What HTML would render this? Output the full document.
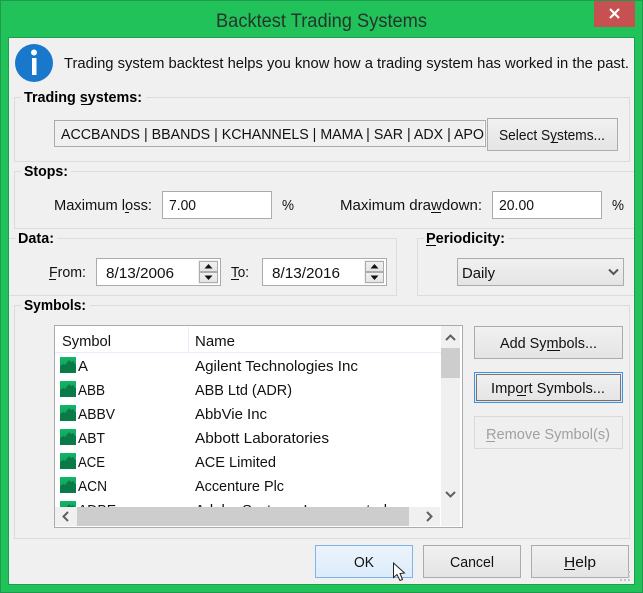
<!DOCTYPE html>
<html><head><meta charset="utf-8"><title>Backtest Trading Systems</title>
<style>
html,body{margin:0;padding:0;width:643px;height:593px;overflow:hidden;background:#22c25a}
svg{display:block;position:absolute;left:0;top:0}
text{font-family:"Liberation Sans",sans-serif;font-size:15.2px;fill:#111}
.b{font-weight:bold;font-size:14.6px;fill:#000}
.g{fill:none;stroke:#dcdcdc;stroke-width:1}
.box{fill:#fff;stroke:#ababab;stroke-width:1}
.btn{fill:url(#bg);stroke:#acacac;stroke-width:1}
.u{stroke:#111;stroke-width:1}
.ar{fill:none;stroke:#606060;stroke-width:2}
.lbg{fill:#f0f0f0}
</style></head><body>
<svg width="643" height="593" viewBox="0 0 643 593" xmlns="http://www.w3.org/2000/svg">
<defs>
<linearGradient id="bg" x1="0" y1="0" x2="0" y2="1"><stop offset="0" stop-color="#f1f1f1"/><stop offset="1" stop-color="#e4e4e4"/></linearGradient>
<linearGradient id="ok" x1="0" y1="0" x2="0" y2="1"><stop offset="0" stop-color="#ecf4fc"/><stop offset="1" stop-color="#dcecfc"/></linearGradient>
<linearGradient id="ic" x1="0" y1="0" x2="0" y2="1"><stop offset="0" stop-color="#13b469"/><stop offset="1" stop-color="#0f9a58"/></linearGradient>
<symbol id="stock" width="16" height="16" viewBox="0 0 16 16">
<rect width="16" height="16" fill="url(#ic)"/>
<path d="M0 9L3 7L5 8L9 3L11 5L13 4L16 8V16H0Z" fill="#0b7a49"/>
</symbol>
<clipPath id="listclip"><rect x="55" y="353" width="386" height="154"/></clipPath>
</defs>

<!-- window frame -->
<rect x="0.5" y="0.5" width="642" height="592" fill="#22c25a" stroke="#1d9a4c"/>
<text x="216" y="27" textLength="211" lengthAdjust="spacingAndGlyphs" style="font-size:19.5px;fill:#24352c">Backtest Trading Systems</text>
<rect x="594" y="1" width="41" height="26" fill="#c75050"/>
<path d="M610 9L619 18M619 9L610 18" stroke="#fff" stroke-width="2.2" fill="none"/>

<!-- client -->
<rect x="8.5" y="37.5" width="626" height="547" fill="#f0f0f0" stroke="#1ba04e"/>

<!-- info -->
<circle cx="34" cy="63" r="19" fill="#1a78cc"/>
<circle cx="34" cy="52.500" r="3" fill="#fff"/>
<rect x="32" y="58" width="4.500" height="17" fill="#fff"/>
<text x="64" y="68" textLength="565" lengthAdjust="spacingAndGlyphs">Trading system backtest helps you know how a trading system has worked in the past.</text>

<!-- trading systems group -->
<rect class="g" x="14.500" y="97.500" width="615" height="64"/>
<rect class="lbg" x="21" y="90" width="125" height="14"/>
<text class="b" x="24" y="102" textLength="118" lengthAdjust="spacingAndGlyphs">Trading systems:</text>
<path class="u" d="M81 104.500H89" style="stroke:#000"/>
<rect x="54.500" y="120.500" width="431" height="26" fill="#f0f0f0" stroke="#ababab"/>
<rect x="484" y="121" width="1" height="25" fill="#fff"/>
<text x="61" y="139" textLength="423" lengthAdjust="spacingAndGlyphs">ACCBANDS | BBANDS | KCHANNELS | MAMA | SAR | ADX | APO</text>
<rect class="btn" x="487.500" y="118.500" width="130" height="32"/>
<text x="499" y="140" textLength="106" lengthAdjust="spacingAndGlyphs">Select Systems...</text>
<path class="u" d="M551 142.500H558"/>

<!-- stops group -->
<path class="g" d="M634 171.500H14.500V228.500H634"/>
<rect class="lbg" x="21" y="164" width="50" height="14"/>
<text class="b" x="24" y="176" textLength="44" lengthAdjust="spacingAndGlyphs">Stops:</text>
<text x="54" y="210" textLength="98" lengthAdjust="spacingAndGlyphs">Maximum loss:</text>
<path class="u" d="M125 212.500H129"/>
<rect class="box" x="162.500" y="191.500" width="109" height="27"/>
<text x="169" y="210" textLength="27" lengthAdjust="spacingAndGlyphs">7.00</text>
<text x="282" y="210" textLength="12" lengthAdjust="spacingAndGlyphs">%</text>
<text x="340" y="210" textLength="142" lengthAdjust="spacingAndGlyphs">Maximum drawdown:</text>
<path class="u" d="M431 212.500H441"/>
<rect class="box" x="492.500" y="191.500" width="109" height="27"/>
<text x="499" y="210" textLength="35" lengthAdjust="spacingAndGlyphs">20.00</text>
<text x="612" y="210" textLength="12" lengthAdjust="spacingAndGlyphs">%</text>

<!-- data group -->
<path class="g" d="M9 238.500H396.500V295.500H9"/>
<rect class="lbg" x="16" y="231" width="41" height="14"/>
<text class="b" x="18" y="243" textLength="36" lengthAdjust="spacingAndGlyphs">Data:</text>
<text x="49" y="277" textLength="37" lengthAdjust="spacingAndGlyphs">From:</text>
<path class="u" d="M49 279.500H56"/>
<rect class="box" x="96.500" y="258.500" width="124" height="27"/>
<text x="106" y="278" textLength="68" lengthAdjust="spacingAndGlyphs">8/13/2006</text>
<rect x="198" y="260" width="20" height="24" fill="#f0f0f0"/>
<rect x="199.500" y="261.500" width="18" height="10" fill="url(#bg)" stroke="#acacac"/>
<rect x="199.500" y="272.500" width="18" height="10" fill="url(#bg)" stroke="#acacac"/>
<path d="M208.500 264L212.500 268.500H204.500Z" fill="#111"/>
<path d="M208.500 280L212.500 275.500H204.500Z" fill="#111"/>
<text x="231" y="277" textLength="18" lengthAdjust="spacingAndGlyphs">To:</text>
<path class="u" d="M231 279.500H239"/>
<rect class="box" x="262.500" y="258.500" width="124" height="27"/>
<text x="272" y="278" textLength="68" lengthAdjust="spacingAndGlyphs">8/13/2016</text>
<rect x="364" y="260" width="20" height="24" fill="#f0f0f0"/>
<rect x="365.500" y="261.500" width="18" height="10" fill="url(#bg)" stroke="#acacac"/>
<rect x="365.500" y="272.500" width="18" height="10" fill="url(#bg)" stroke="#acacac"/>
<path d="M374.500 264L378.500 268.500H370.500Z" fill="#111"/>
<path d="M374.500 280L378.500 275.500H370.500Z" fill="#111"/>

<!-- periodicity group -->
<path class="g" d="M634 238.500H417.500V295.500H634"/>
<rect class="lbg" x="424" y="231" width="84" height="14"/>
<text class="b" x="426" y="243" textLength="79" lengthAdjust="spacingAndGlyphs">Periodicity:</text>
<path class="u" d="M426 245.500H436" style="stroke:#000"/>
<rect class="btn" x="457.500" y="258.500" width="166" height="27"/>
<text x="462" y="278" textLength="33" lengthAdjust="spacingAndGlyphs">Daily</text>
<path class="ar" d="M609 269.500L613.500 274L618 269.500" style="stroke:#555"/>

<!-- symbols group -->
<rect class="g" x="14.500" y="305.500" width="615" height="233"/>
<rect class="lbg" x="21" y="298" width="69" height="14"/>
<text class="b" x="24" y="310" textLength="62" lengthAdjust="spacingAndGlyphs">Symbols:</text>

<!-- list -->
<rect class="box" x="54.500" y="325.500" width="408" height="202"/>
<path d="M55 352.500H441" stroke="#e5effb"/>
<path d="M188.500 327V352" stroke="#e5effb"/>
<text x="62" y="346" textLength="49" lengthAdjust="spacingAndGlyphs">Symbol</text>
<text x="195" y="346" textLength="40" lengthAdjust="spacingAndGlyphs">Name</text>
<g clip-path="url(#listclip)">
<use href="#stock" x="60" y="357"/><text x="78" y="371" textLength="10" lengthAdjust="spacingAndGlyphs">A</text><text x="195" y="371" textLength="163" lengthAdjust="spacingAndGlyphs">Agilent Technologies Inc</text>
<use href="#stock" x="60" y="381"/><text x="78" y="395" textLength="27" lengthAdjust="spacingAndGlyphs">ABB</text><text x="195" y="395" textLength="97" lengthAdjust="spacingAndGlyphs">ABB Ltd (ADR)</text>
<use href="#stock" x="60" y="405"/><text x="78" y="419" textLength="37" lengthAdjust="spacingAndGlyphs">ABBV</text><text x="195" y="419" textLength="72" lengthAdjust="spacingAndGlyphs">AbbVie Inc</text>
<use href="#stock" x="60" y="429"/><text x="78" y="443" textLength="27" lengthAdjust="spacingAndGlyphs">ABT</text><text x="195" y="443" textLength="134" lengthAdjust="spacingAndGlyphs">Abbott Laboratories</text>
<use href="#stock" x="60" y="453"/><text x="78" y="467" textLength="27" lengthAdjust="spacingAndGlyphs">ACE</text><text x="195" y="467" textLength="81" lengthAdjust="spacingAndGlyphs">ACE Limited</text>
<use href="#stock" x="60" y="477"/><text x="78" y="491" textLength="29" lengthAdjust="spacingAndGlyphs">ACN</text><text x="195" y="491" textLength="89" lengthAdjust="spacingAndGlyphs">Accenture Plc</text>
<use href="#stock" x="60" y="501"/><text x="78" y="515" textLength="38" lengthAdjust="spacingAndGlyphs">ADBE</text><text x="195" y="515" textLength="192" lengthAdjust="spacingAndGlyphs">Adobe Systems Incorporated</text>
</g>
<!-- scrollbars -->
<rect x="55" y="507" width="385" height="19" fill="#f0f0f0"/>
<rect x="77" y="507" width="332" height="19" fill="#cdcdcd"/>
<path class="ar" d="M68 512L63.500 516.500L68 521"/>
<path class="ar" d="M427 512L431.500 516.500L427 521"/>
<rect x="441" y="326" width="19" height="200" fill="#f0f0f0"/>
<rect x="441" y="348" width="19" height="30" fill="#cdcdcd"/>
<path class="ar" d="M446 340L450.500 335.500L455 340"/>
<path class="ar" d="M446 492L450.500 496.500L455 492"/>

<!-- side buttons -->
<rect class="btn" x="474.500" y="326.500" width="148" height="32"/>
<text x="500" y="348" textLength="97" lengthAdjust="spacingAndGlyphs">Add Symbols...</text>
<path class="u" d="M547 350.500H560"/>
<rect x="474.500" y="372.500" width="148" height="30" fill="url(#bg)" stroke="#3c94e4"/>
<rect x="476.500" y="374.500" width="144" height="26" fill="none" stroke="#000" stroke-dasharray="1 1"/>
<text x="491" y="393" textLength="114" lengthAdjust="spacingAndGlyphs">Import Symbols...</text>
<path class="u" d="M517 395.500H526"/>
<rect x="474.500" y="416.500" width="148" height="32" fill="#efefef" stroke="#d9d9d9"/>
<text x="486" y="439" textLength="124" lengthAdjust="spacingAndGlyphs" style="fill:#a0a0a0">Remove Symbol(s)</text>
<path d="M486 441.500H495" stroke="#a0a0a0"/>

<!-- bottom buttons -->
<rect x="315.500" y="545.500" width="97" height="32" fill="url(#ok)" stroke="#7eb4ea"/>
<text x="354" y="567" textLength="20" lengthAdjust="spacingAndGlyphs">OK</text>
<rect class="btn" x="423.500" y="545.500" width="97" height="32"/>
<text x="450" y="567" textLength="44" lengthAdjust="spacingAndGlyphs">Cancel</text>
<rect class="btn" x="531.500" y="545.500" width="97" height="32"/>
<text x="564" y="567" textLength="32" lengthAdjust="spacingAndGlyphs">Help</text>
<path class="u" d="M564 569.500H575"/>

<!-- cursor -->
<path d="M393.500 563V577.500L397 574.500L400 580.500L402.500 579.500L400 573.500L404.500 573Z" fill="#fff" stroke="#222" stroke-width="1"/>

<!-- grip -->
<path d="M620 579h2v2h-2zM624 579h2v2h-2zM628 579h2v2h-2zM628 575h2v2h-2zM628 571h2v2h-2z" fill="#c4c4c4"/>
</svg>
</body></html>
